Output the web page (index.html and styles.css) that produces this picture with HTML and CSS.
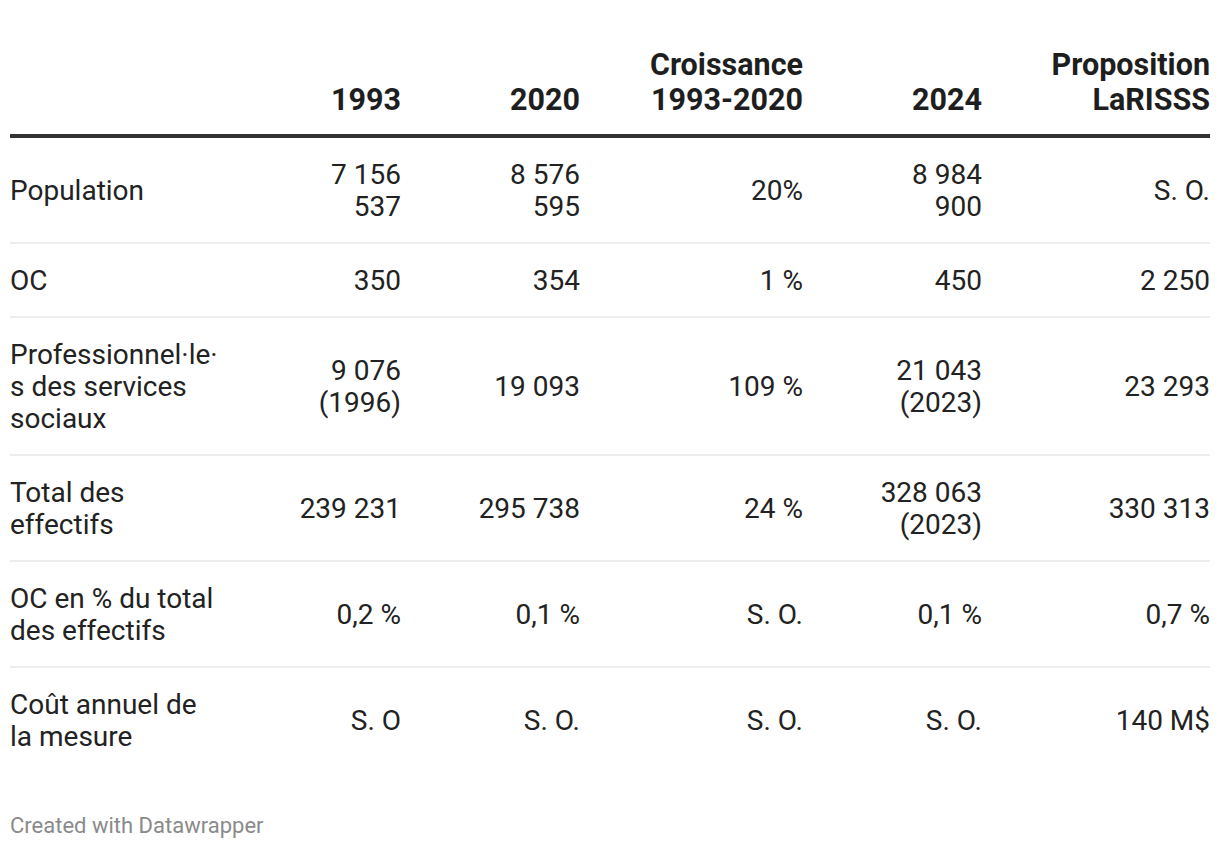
FILE: index.html
```html
<!DOCTYPE html>
<html lang="fr">
<head>
<meta charset="utf-8">
<title>Tableau</title>
<link rel="stylesheet" href="styles.css">
</head>
<body>
<div class="chart">
  <table class="dw-table">
    <colgroup>
      <col class="c-label">
      <col class="c-1993">
      <col class="c-2020">
      <col class="c-growth">
      <col class="c-2024">
      <col class="c-prop">
    </colgroup>
    <thead>
      <tr>
        <th class="label"></th>
        <th class="num n-narrow n-first">1993</th>
        <th class="num n-narrow">2020</th>
        <th class="num n-wide">Croissance 1993-2020</th>
        <th class="num n-narrow">2024</th>
        <th class="num n-wide">Proposition LaRISSS</th>
      </tr>
    </thead>
    <tbody>
      <tr>
        <td class="label">Population</td>
        <td class="num n-narrow n-first">7 156 537</td>
        <td class="num n-narrow">8 576 595</td>
        <td class="num n-wide">20%</td>
        <td class="num n-narrow">8 984 900</td>
        <td class="num n-wide">S. O.</td>
      </tr>
      <tr>
        <td class="label">OC</td>
        <td class="num n-narrow n-first">350</td>
        <td class="num n-narrow">354</td>
        <td class="num n-wide">1 %</td>
        <td class="num n-narrow">450</td>
        <td class="num n-wide">2 250</td>
      </tr>
      <tr>
        <td class="label">Professionnel·le·<wbr>s des services sociaux</td>
        <td class="num n-narrow n-first">9 076 (1996)</td>
        <td class="num n-narrow">19 093</td>
        <td class="num n-wide">109 %</td>
        <td class="num n-narrow">21 043 (2023)</td>
        <td class="num n-wide">23 293</td>
      </tr>
      <tr>
        <td class="label">Total des effectifs</td>
        <td class="num n-narrow n-first">239 231</td>
        <td class="num n-narrow">295 738</td>
        <td class="num n-wide">24 %</td>
        <td class="num n-narrow">328 063 (2023)</td>
        <td class="num n-wide">330 313</td>
      </tr>
      <tr>
        <td class="label">OC en % du total des effectifs</td>
        <td class="num n-narrow n-first">0,2 %</td>
        <td class="num n-narrow">0,1 %</td>
        <td class="num n-wide">S. O.</td>
        <td class="num n-narrow">0,1 %</td>
        <td class="num n-wide">0,7 %</td>
      </tr>
      <tr class="last">
        <td class="label">Coût annuel de la mesure</td>
        <td class="num n-narrow n-first">S. O</td>
        <td class="num n-narrow">S. O.</td>
        <td class="num n-wide">S. O.</td>
        <td class="num n-narrow">S. O.</td>
        <td class="num n-wide">140 M$</td>
      </tr>
    </tbody>
  </table>
  <footer class="credit">Created with Datawrapper</footer>
</div>
</body>
</html>
```

FILE: styles.css
```css
html, body {
  margin: 0;
  padding: 0;
  background: #ffffff;
}

body {
  font-family: Roboto, "Liberation Sans", Arial, sans-serif;
  color: #222222;
}

.chart {
  padding: 47px 10px 0 10px;
}

.dw-table {
  width: 1200px;
  table-layout: fixed;
  border-collapse: collapse;
  border-spacing: 0;
}

.c-label { width: 215px; }
.c-1993 { width: 176px; }
.c-2020 { width: 179px; }
.c-growth { width: 223px; }
.c-2024 { width: 179px; }
.c-prop { width: 228px; }

th, td {
  padding: 0;
  margin: 0;
}

thead th {
  font-size: 30.5px;
  line-height: 35px;
  font-weight: 700;
  color: #1e1e1e;
  vertical-align: bottom;
  padding-bottom: 17px;
  border-bottom: 4px solid #333333;
}

tbody td {
  font-size: 28px;
  line-height: 32px;
  font-weight: 400;
  vertical-align: middle;
  padding-top: 21px;
  padding-bottom: 19px;
  border-bottom: 2px solid #eeeeee;
}

tbody tr.last td {
  border-bottom: none;
}

.label {
  text-align: left;
  padding-right: 4px;
  overflow-wrap: break-word;
}

.num {
  text-align: right;
}

.n-narrow {
  padding-left: 69px;
}

.n-first {
  padding-left: 66px;
}

.n-wide {
  padding-left: 63px;
}

.credit {
  margin-top: 41px;
  font-size: 22px;
  line-height: 26px;
  color: #8a8a8a;
}
```
